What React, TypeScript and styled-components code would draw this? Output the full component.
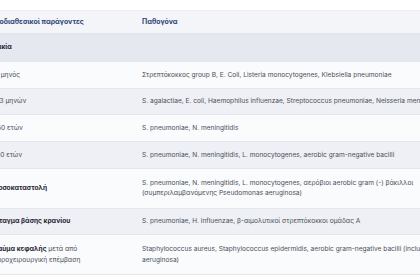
import React from "react";
import styled, { createGlobalStyle } from "styled-components";

const Global = createGlobalStyle`
  html, body { margin: 0; padding: 0; background: #ffffff; }
  body { font-family: Inter, "Noto Sans", sans-serif; overflow: hidden; }
`;

const Page = styled.div`
  width: 420px;
  height: 280px;
  overflow: hidden;
  padding-top: 10px;
  box-sizing: border-box;
`;

const Table = styled.table`
  margin-left: -20px;
  border-collapse: collapse;
  table-layout: fixed;
  width: 514px;
  font-size: 6.6px;
  line-height: 10.5px;
  color: #4a4f5a;
`;

const HeadCell = styled.th`
  text-align: left;
  font-weight: 700;
  font-size: 6.9px;
  color: #2d4378;
  background: #f4f5f9;
  padding: 5.5px 10px;
  border-top: 1px solid #eceef3;
  border-bottom: 1px solid #e2e5ec;
`;

const Row = styled.tr<{ $tone: "white" | "gray" | "section" }>`
  background: ${(p) =>
    p.$tone === "section" ? "#e6e8f0" : p.$tone === "gray" ? "#eef0f5" : "#fafbfc"};
`;

const Cell = styled.td<{ $strong?: boolean; $tall?: boolean }>`
  padding: ${(p) => (p.$tall ? "9px 10px" : "7.6px 10px")};
  vertical-align: middle;
  border-bottom: 1px solid #e3e6ec;
  font-weight: ${(p) => (p.$strong ? 700 : 400)};
  color: ${(p) => (p.$strong ? "#1f2430" : "#4a4f5a")};
`;

const SectionCell = styled(Cell)`
  padding: 8.5px 10px;
`;

const B = styled.b`
  font-weight: 700;
  color: #1f2430;
`;

type RowData = { tone: "white" | "gray"; tall?: boolean; left: React.ReactNode; right: string };

const rows: RowData[] = [
  {
    tone: "white",
    left: "< 1 μηνός",
    right: "Στρεπτόκοκκος group B, E. Coli, Listeria monocytogenes, Klebsiella pneumoniae",
  },
  {
    tone: "gray",
    left: "1-23 μηνών",
    right:
      "S. agalactiae, E. coli, Haemophilus influenzae, Streptococcus pneumoniae, Neisseria meningitidis",
  },
  { tone: "white", left: "2-50 ετών", right: "S. pneumoniae, N. meningitidis" },
  {
    tone: "gray",
    left: "> 50 ετών",
    right: "S. pneumoniae, N. meningitidis, L. monocytogenes, aerobic gram-negative bacilli",
  },
  {
    tone: "white",
    tall: true,
    left: <B>Ανοσοκαταστολή</B>,
    right:
      "S. pneumoniae, N. meningitidis, L. monocytogenes, αερόβιοι aerobic gram (-) βάκιλλοι (συμπεριλαμβανόμενης Pseudomonas aeruginosa)",
  },
  {
    tone: "gray",
    left: <B>Κάταγμα βάσης κρανίου</B>,
    right: "S. pneumoniae, H. influenzae, β-αιμολυτικοί στρεπτόκοκκοι ομάδας Α",
  },
  {
    tone: "white",
    tall: true,
    left: (
      <>
        <B>Τραύμα κεφαλής</B> μετά από νευροχειρουργική επέμβαση
      </>
    ),
    right:
      "Staphylococcus aureus, Staphylococcus epidermidis, aerobic gram-negative bacilli (including Pseudomonas aeruginosa)",
  },
];

export default function App() {
  return (
    <>
      <Global />
      <Page>
        <Table>
          <colgroup>
            <col style={{ width: 152 }} />
            <col />
          </colgroup>
          <thead>
            <tr>
              <HeadCell>Προδιαθεσικοί παράγοντες</HeadCell>
              <HeadCell>Παθογόνα</HeadCell>
            </tr>
          </thead>
          <tbody>
            <Row $tone="section">
              <SectionCell $strong>Ηλικία</SectionCell>
              <SectionCell />
            </Row>
            {rows.map((r, i) => (
              <Row key={i} $tone={r.tone}>
                <Cell $tall={r.tall}>{r.left}</Cell>
                <Cell $tall={r.tall}>{r.right}</Cell>
              </Row>
            ))}
          </tbody>
        </Table>
      </Page>
    </>
  );
}
